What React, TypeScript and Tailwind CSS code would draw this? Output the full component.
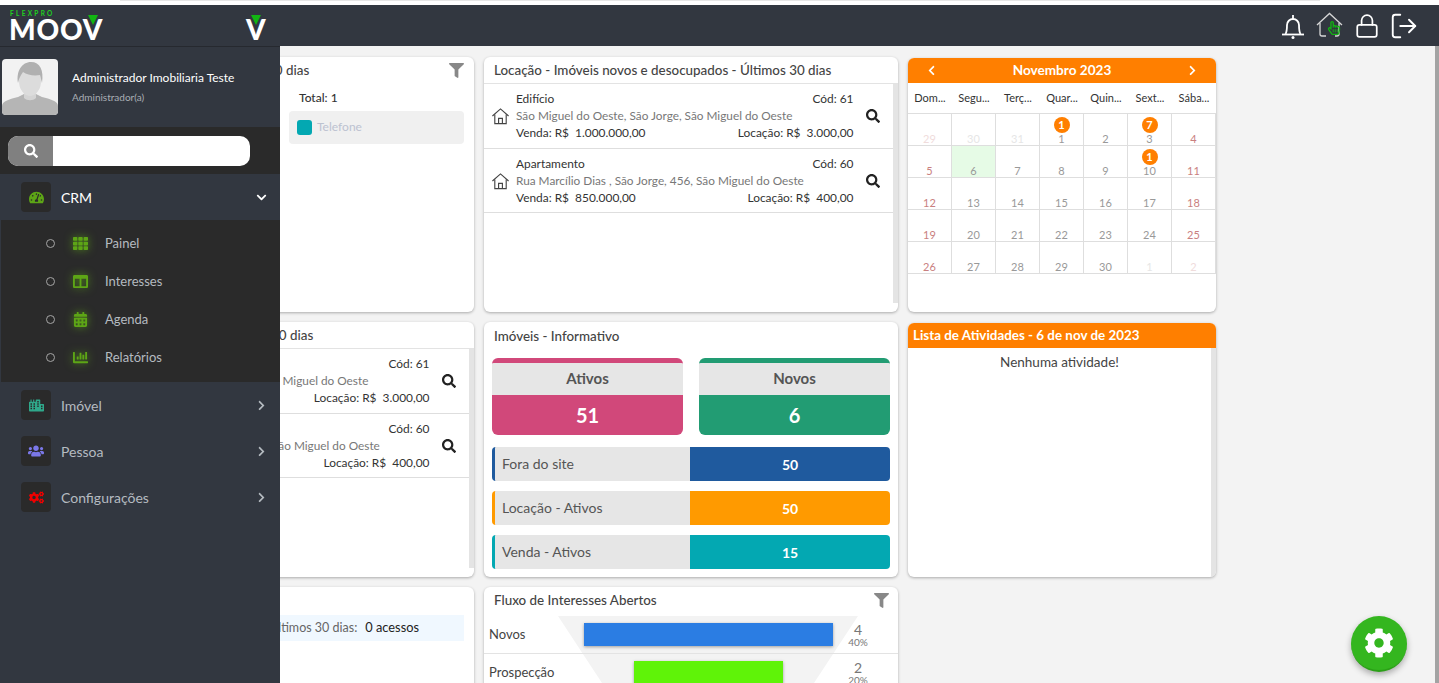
import React from 'react'
import { Lock, LogOut } from 'lucide-react'
import {
  FaSearch,
  FaFilter,
  FaChevronLeft,
  FaChevronRight,
  FaChevronDown,
  FaTachometerAlt,
  FaTh,
  FaColumns,
  FaCalendarAlt,
  FaChartBar,
  FaCity,
  FaUsers,
  FaCogs,
  FaCog,
  FaRegHandPointer,
} from 'react-icons/fa'

const imoveis = [
  {
    tipo: 'Edifício',
    cod: 61,
    endereco: 'São Miguel do Oeste, São Jorge, São Miguel do Oeste',
    venda: '1.000.000,00',
    locacao: '3.000,00',
  },
  {
    tipo: 'Apartamento',
    cod: 60,
    endereco: 'Rua Marcílio Dias , São Jorge, 456, São Miguel do Oeste',
    venda: '850.000,00',
    locacao: '400,00',
  },
]

const dias = ['Dom...', 'Segu...', 'Terç...', 'Quar...', 'Quin...', 'Sext...', 'Sába...']

const semanas = [
  [29, 30, 31, 1, 2, 3, 4],
  [5, 6, 7, 8, 9, 10, 11],
  [12, 13, 14, 15, 16, 17, 18],
  [19, 20, 21, 22, 23, 24, 25],
  [26, 27, 28, 29, 30, 1, 2],
]

function HouseIcon() {
  return (
    <svg viewBox="0 0 20 20" className="w-[19px] h-[19px] shrink-0" fill="none" stroke="#444" strokeWidth="1.2">
      <path d="M1.5 9.5 10 2l8.5 7.5" />
      <path d="M4 8v9.5h12V8" />
      <path d="M8 17.5v-5.5h4v5.5" />
    </svg>
  )
}

function Card({ children, className = '' }: { children: React.ReactNode; className?: string }) {
  return <div className={`bg-white rounded-md shadow-[0_1px_3px_rgba(0,0,0,0.3)] overflow-hidden ${className}`}>{children}</div>
}

function ImoveisCard({ titulo }: { titulo: string }) {
  return (
    <Card className="h-[255px] flex flex-col">
      <div className="h-[27px] pt-[1px] px-2.5 flex items-center border-b border-[#e3e3e3] text-[13.4px] font-medium text-[#444] whitespace-nowrap shrink-0">
        {titulo}
      </div>
      <div className="flex flex-1 min-h-0">
        <div className="flex-1">
          {imoveis.map((i) => (
            <div key={i.cod} className="h-[64.5px] border-b border-[#dedede] flex items-center text-[11.9px] leading-[17px]">
              <div className="w-[32px] pl-[7px] flex justify-start pt-[2px]">
                <HouseIcon />
              </div>
              <div className="w-[337.5px]">
                <div className="flex justify-between text-[#333]">
                  <span>{i.tipo}</span>
                  <span>Cód: {i.cod}</span>
                </div>
                <div className="text-[11.8px] text-[#777] whitespace-nowrap">{i.endereco}</div>
                <div className="flex justify-between text-[#333]">
                  <span>Venda: R$&nbsp; {i.venda}</span>
                  <span>Locação: R$&nbsp; {i.locacao}</span>
                </div>
              </div>
              <div className="flex-1 flex justify-center pt-[1px]">
                <FaSearch className="text-[14px] text-[#222]" />
              </div>
            </div>
          ))}
        </div>
        <div className="w-[5px] bg-[#e4e4e4] mb-[9px]" />
      </div>
    </Card>
  )
}

function Calendario() {
  return (
    <Card className="h-[254px] mt-[1px]">
      <div className="h-[25px] bg-[#ff7f00] flex items-center justify-between px-[18px] text-white">
        <FaChevronLeft className="text-[11px]" />
        <span className="text-[13.6px] font-bold">Novembro 2023</span>
        <FaChevronRight className="text-[11px]" />
      </div>
      <div className="grid grid-cols-7 h-[30px] items-center text-center text-[11px] text-[#333]">
        {dias.map((d) => (
          <span key={d}>{d}</span>
        ))}
      </div>
      <div className="border-t border-[#dedede]">
        {semanas.map((s, r) => (
          <div key={r} className="grid grid-cols-7 h-[32px] border-b border-[#dedede]">
            {s.map((d, c) => {
              const fora = (r === 0 && d > 20) || (r === 4 && d < 10)
              const fimSemana = c === 0 || c === 6
              const badge = r === 0 && d === 1 ? 1 : r === 0 && d === 3 ? 7 : r === 1 && d === 10 ? 1 : 0
              return (
                <div
                  key={c}
                  className={`relative flex items-end justify-center text-[11px] leading-[12px] border-r border-[#dedede] ${
                    r === 1 && d === 6 ? 'bg-[#e6fbe6]' : ''
                  } ${
                    fora ? (fimSemana ? 'text-[#f0dcdc]' : 'text-[#e6e6e6]') : fimSemana ? 'text-[#c98080]' : 'text-[#999]'
                  }`}
                >
                  {badge > 0 && (
                    <span className="absolute top-[3px] left-1/2 -translate-x-1/2 w-4 h-4 rounded-full bg-[#ff7f00] text-white text-[11px] leading-4 font-bold text-center">
                      {badge}
                    </span>
                  )}
                  {d}
                </div>
              )
            })}
          </div>
        ))}
      </div>
    </Card>
  )
}

function Informativo() {
  return (
    <Card className="h-[255px] px-2">
      <div className="h-[28px] pt-[1px] px-0.5 flex items-center text-[13.4px] font-medium text-[#444]">Imóveis - Informativo</div>
      <div className="grid grid-cols-2 gap-4 mt-2">
        <div className="rounded-md overflow-hidden border-t-[5px] border-[#d1487a]">
          <div className="h-[32px] pb-[2px] bg-[#e6e6e6] flex items-center justify-center text-[15px] font-bold text-[#555]">Ativos</div>
          <div className="h-[40px] bg-[#d1487a] flex items-center justify-center text-[20px] font-bold text-white">51</div>
        </div>
        <div className="rounded-md overflow-hidden border-t-[5px] border-[#229c73]">
          <div className="h-[32px] pb-[2px] bg-[#e6e6e6] flex items-center justify-center text-[15px] font-bold text-[#555]">Novos</div>
          <div className="h-[40px] bg-[#229c73] flex items-center justify-center text-[20px] font-bold text-white">6</div>
        </div>
      </div>
      <div className="mt-3 flex flex-col gap-2.5">
        <div className="h-[34px] rounded flex overflow-hidden border-l-[3px] border-[#1f5a9e]">
          <div className="w-[195px] pb-[2px] bg-[#e6e6e6] flex items-center pl-[7px] text-[14px] text-[#555]">Fora do site</div>
          <div className="flex-1 bg-[#1f5a9e] flex items-center justify-center text-[14px] font-bold text-white">50</div>
        </div>
        <div className="h-[34px] rounded flex overflow-hidden border-l-[3px] border-[#ff9a00]">
          <div className="w-[195px] pb-[2px] bg-[#e6e6e6] flex items-center pl-[7px] text-[14px] text-[#555]">Locação - Ativos</div>
          <div className="flex-1 bg-[#ff9a00] flex items-center justify-center text-[14px] font-bold text-white">50</div>
        </div>
        <div className="h-[34px] rounded flex overflow-hidden border-l-[3px] border-[#03a8b2]">
          <div className="w-[195px] pb-[2px] bg-[#e6e6e6] flex items-center pl-[7px] text-[14px] text-[#555]">Venda - Ativos</div>
          <div className="flex-1 bg-[#03a8b2] flex items-center justify-center text-[14px] font-bold text-white">15</div>
        </div>
      </div>
    </Card>
  )
}

function Funil() {
  return (
    <Card className="h-[130px]">
      <div className="h-[29px] pb-[2px] px-2.5 flex items-center justify-between text-[13.4px] font-medium text-[#444]">
        Fluxo de Interesses Abertos
        <FaFilter className="text-[15px] text-[#888] -mr-[1px]" />
      </div>
      <div className="relative">
        <svg viewBox="0 0 300 100" className="absolute left-[74px] top-0 w-[300px] h-[100px]">
          <polygon points="0,0 300,0 256,67 256,100 44,100 44,67" fill="#f3f3f3" />
        </svg>
        <div className="relative grid grid-cols-[100px_249px_50px] h-[38px] items-center border-b border-[#e3e3e3]">
          <span className="pl-[5px] text-[13px] text-[#444]">Novos</span>
          <div className="h-[23px] bg-[#2b7de3] shadow-[0_1px_3px_rgba(0,0,0,0.35)]" />
          <div className="text-center text-[#777] leading-none">
            <div className="text-[14px]">4</div>
            <div className="text-[10px]">40%</div>
          </div>
        </div>
        <div className="relative grid grid-cols-[100px_249px_50px] h-[37px] items-center">
          <span className="pl-[5px] text-[13px] text-[#444]">Prospecção</span>
          <div className="h-[23px] w-[149px] mx-auto bg-[#5ff308] shadow-[0_1px_3px_rgba(0,0,0,0.35)]" />
          <div className="text-center text-[#777] leading-none">
            <div className="text-[14px]">2</div>
            <div className="text-[10px]">20%</div>
          </div>
        </div>
      </div>
    </Card>
  )
}

function MenuItem({ icon, label, active }: { icon: React.ReactNode; label: string; active?: boolean }) {
  return (
    <div className="h-[46px] flex items-center pl-[21px] pr-[13px]">
      <div className="w-[30px] h-[30px] rounded bg-[#2a2a2a] flex items-center justify-center">{icon}</div>
      <span className={`ml-[10px] flex-1 text-[14px] ${active ? 'text-white' : 'text-[#b5bbc0]'}`}>{label}</span>
      {active ? (
        <FaChevronDown className="text-[11px] text-white" />
      ) : (
        <FaChevronRight className="text-[11px] text-[#b5bbc0]" />
      )}
    </div>
  )
}

function SubItem({ icon, label }: { icon: React.ReactNode; label: string }) {
  return (
    <div className="h-[38px] flex items-center pl-[45px]">
      <span className="w-[9px] h-[9px] rounded-full border border-[#a5a5a5]" />
      <span className="w-[44px] flex justify-center text-[15px] text-[#5da516] drop-shadow-[0_0_4px_rgba(93,165,22,0.8)] ml-[3px]">{icon}</span>
      <span className="ml-[3px] text-[13px] text-[#b5bbc0]">{label}</span>
    </div>
  )
}

function Sidebar() {
  return (
    <aside className="absolute left-0 top-[46px] bottom-0 w-[280px] bg-[#323740] border-t border-[#26292f]">
      <div className="h-[80px] flex items-center pl-[2px]">
        <svg viewBox="0 0 56 56" className="w-[56px] h-[56px] rounded">
          <rect width="56" height="56" fill="#f2f2f2" />
          <path d="M0 56v-9c0-5 8-7 16-9l6-3h12l6 3c8 2 16 4 16 9v9z" fill="#b5b5b5" />
          <path d="M22 30h12v9c-3 3-9 3-12 0z" fill="#d4d4d4" />
          <ellipse cx="28" cy="22" rx="11" ry="15" fill="#dcdcdc" />
          <path d="M16 24c-2-12 4-21 13-21s13 8 11 21l-2-8c-6 1-13 0-17-3-2 3-4 6-5 11z" fill="#b0b0b0" />
        </svg>
        <div className="ml-[14px] -mt-[1px]">
          <div className="text-[12px] text-white whitespace-nowrap pt-[1px]">Administrador Imobiliaria Teste</div>
          <div className="mt-[3px] text-[10px] text-[#a9aeb4]">Administrador(a)</div>
        </div>
      </div>
      <div className="h-[47px] bg-[#2a2a2a] flex items-center pl-2">
        <div className="w-[242px] h-[30px] rounded-[10px] overflow-hidden flex bg-white">
          <div className="w-[45px] bg-[#808080] flex items-center justify-center">
            <FaSearch className="text-[14px] text-white" />
          </div>
        </div>
      </div>
      <MenuItem active label="CRM" icon={<FaTachometerAlt className="text-[15px] text-[#5da516]" />} />
      <div className="h-[162px] ml-[1px] bg-[#2a2a2a] pt-[4.5px]">
        <SubItem icon={<FaTh />} label="Painel" />
        <SubItem icon={<FaColumns />} label="Interesses" />
        <SubItem icon={<FaCalendarAlt />} label="Agenda" />
        <SubItem icon={<FaChartBar />} label="Relatórios" />
      </div>
      <MenuItem label="Imóvel" icon={<FaCity className="text-[15px] text-[#2fa88a]" />} />
      <MenuItem label="Pessoa" icon={<FaUsers className="text-[16px] text-[#7b78e8]" />} />
      <MenuItem label="Configurações" icon={<FaCogs className="text-[15px] text-[#f00000]" />} />
    </aside>
  )
}

function Header() {
  return (
    <header className="relative h-[41px] bg-[#323740] flex items-center justify-between shrink-0">
      <div className="flex items-center">
        <div className="relative ml-[10px] w-[100px] h-[41px] text-white">
          <span className="absolute left-0 top-[6px] text-[6.5px] leading-[6px] font-bold tracking-[2.3px] text-[#1fd01f]">FLEXPRO</span>
          <span className="absolute -left-[1px] top-[13px] text-[28px] leading-[22px] font-black tracking-[0.8px]">MOOV</span>
          <svg viewBox="0 0 10 10" className="absolute left-[78px] top-[10px] w-[10px] h-[10px]">
            <polygon points="0,0 10,0 5,10" fill="#12b512" />
          </svg>
        </div>
        <div className="relative ml-[136px] w-[20px] h-[41px] text-white">
          <span className="absolute left-0 top-[13px] text-[28px] leading-[22px] font-black">V</span>
          <svg viewBox="0 0 10 10" className="absolute left-[5px] top-[10px] w-[10px] h-[10px]">
            <polygon points="0,0 10,0 5,10" fill="#12b512" />
          </svg>
        </div>
      </div>
      <div className="flex items-center gap-[9px] pr-[20px] text-white">
        <svg viewBox="0 0 24 28" className="w-[24px] h-[28px] mr-[2px]" fill="none" stroke="white" strokeWidth="1.8">
          <path d="M4.5 22c1.5-2.5 1.5-5 1.5-9a6 6 0 0 1 12 0c0 4 0 6.500 1.500 9" />
          <path d="M1 22.500h22" />
          <path d="M12 7V3" />
          <circle cx="12" cy="25.500" r="1.500" fill="white" stroke="none" />
        </svg>
        <div className="relative w-[27px] h-[27px] mr-[2px]">
          <svg viewBox="0 0 27 27" className="w-[27px] h-[27px]" fill="none" stroke="#d6d6d6" strokeWidth="1.3">
            <path d="M1 13 13.500 1.500 26 13" />
            <path d="M4 11v11q0 2 2 2h4M23 11v11q0 2-2 2h-2" />
          </svg>
          <FaRegHandPointer className="absolute left-[11px] top-[9px] text-[14px] text-[#12b512]" />
        </div>
        <Lock size={26} strokeWidth={1.6} />
        <LogOut size={30} strokeWidth={1.5} />
      </div>
    </header>
  )
}

export default function App() {
  return (
    <div
      className="relative w-[1439px] h-[683px] overflow-hidden bg-[#f3f3f3] flex flex-col"
      style={{ fontFamily: 'Lato, "Noto Sans", sans-serif' }}
    >
      <div className="h-[5px] bg-white shrink-0 flex">
        <div className="ml-[120px] w-[1200px] h-[1px] bg-[#e6e6e6]" />
      </div>
      <Header />
      <main className="flex-1 min-h-0 flex">
        <div className="flex-1 pt-[11px] pl-[60px]">
          <div className="grid grid-cols-[414px_414px_308px] gap-[10px]">
            <Card className="h-[255px] relative">
              <div className="h-[27px] px-2.5 flex items-center justify-between text-[13.4px] font-medium text-[#444]">
                <span className="ml-[3px]">Origens dos Interesses - Últimos 30 dias</span>
                <FaFilter className="text-[15px] text-[#888]" />
              </div>
              <div className="pl-[239px] mt-[5px] text-[12px] font-medium text-[#333]">Total: 1</div>
              <div className="ml-[229px] mt-[4px] w-[175px] h-[33px] pb-[1px] bg-[#f0f0f0] rounded flex items-center pl-2">
                <span className="w-[15px] h-[15px] rounded-[3px] bg-[#03a8b2]" />
                <span className="ml-[5px] text-[12px] text-[#bcc2d0]">Telefone</span>
              </div>
            </Card>
            <ImoveisCard titulo="Locação - Imóveis novos e desocupados - Últimos 30 dias" />
            <Calendario />

            <ImoveisCard titulo="Venda - Imóveis em alta - Últimos 30 dias" />
            <Informativo />
            <Card className="h-[254px] mt-[1px] flex flex-col">
              <div className="h-[25px] bg-[#ff7f00] flex items-center px-[5px] text-[13.4px] font-bold text-white shrink-0">
                Lista de Atividades - 6 de nov de 2023
              </div>
              <div className="flex flex-1">
                <div className="flex-1 text-center pt-[4px] text-[13.5px] text-[#444]">Nenhuma atividade!</div>
                <div className="w-[5px] bg-[#e4e4e4]" />
              </div>
            </Card>

            <Card className="h-[130px]">
              <div className="h-[28px]" />
              <div className="ml-[10px] mr-[10px] h-[26px] bg-[#f0f8ff] flex items-center justify-end pr-[45px] whitespace-nowrap">
                <span className="text-[12.5px] text-[#666]">Últimos 30 dias:</span>
                <span className="ml-[8px] text-[12.8px] text-[#222]">0 acessos</span>
              </div>
            </Card>
            <Funil />
          </div>
        </div>
        <div className="w-[4px] bg-[#a3a3a3] shrink-0" />
      </main>
      <Sidebar />
      <button className="absolute left-[1351px] top-[616px] w-[56px] h-[56px] rounded-full bg-[#34b61f] border-b-2 border-[#2ba017] shadow-[0_3px_6px_rgba(0,0,0,0.3)] flex items-center justify-center">
        <FaCog className="text-[30px] text-white" />
      </button>
    </div>
  )
}
